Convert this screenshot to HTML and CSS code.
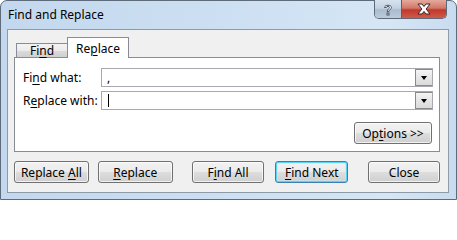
FILE: index.html
```html
<!DOCTYPE html>
<html>
<head>
<meta charset="utf-8">
<title>Find and Replace</title>
<link rel="stylesheet" href="styles.css">
</head>
<body>
<div class="window">
  <div class="titlebar">
    <div class="title">Find and Replace</div>
    <div class="caption">
      <div class="cap help">
        <svg width="12" height="13" viewBox="0 0 12 13">
          <path d="M2.5 4.5 C2.5 1.5 9.5 1.5 9.5 4.5 C9.5 6.5 6.8 6.5 6.8 8.5 L5.2 8.5 C5.2 6 7.6 5.8 7.6 4.5 C7.6 3 4.4 3 4.4 4.5 Z" fill="#fff" stroke="#4a5560" stroke-width="1"/>
          <rect x="5" y="10" width="2" height="2" fill="#fff" stroke="#4a5560" stroke-width="1"/>
        </svg>
      </div>
      <div class="cap close">
        <svg width="16" height="12" viewBox="0 0 16 12">
          <path d="M2 1 L6 1 L8 3.6 L10 1 L14 1 L10.2 6 L14 11 L10 11 L8 8.4 L6 11 L2 11 L5.8 6 Z" fill="#fff" stroke="#3a2424" stroke-width="1" stroke-linejoin="round"/>
        </svg>
      </div>
    </div>
  </div>
  <div class="client">
    <div class="tabs">
      <div class="tab">Fi<u>n</u>d</div>
      <div class="tab active">Re<u>p</u>lace</div>
    </div>
    <div class="panel">
      <div class="fields">
        <label class="label">Fi<u>n</u>d what:</label>
        <div class="combo">
          <span class="value">,</span>
          <span class="drop"><span class="arrow"></span></span>
        </div>
        <label class="label">R<u>e</u>place with:</label>
        <div class="combo">
          <span class="caret"></span>
          <span class="drop"><span class="arrow"></span></span>
        </div>
      </div>
      <div class="options-row">
        <button class="btn options">Op<u>t</u>ions &gt;&gt;</button>
      </div>
    </div>
    <div class="buttons">
      <button class="btn b-all">Replace <u>A</u>ll</button>
      <button class="btn b-rep"><u>R</u>eplace</button>
      <button class="btn b-findall">F<u>i</u>nd All</button>
      <button class="btn b-next default"><u>F</u>ind Next</button>
      <button class="btn b-close">Close</button>
    </div>
  </div>
</div>
</body>
</html>
```
FILE: styles.css
```css
* { box-sizing: border-box; }
html, body { margin: 0; padding: 0; }
body {
  width: 457px;
  height: 200px;
  overflow: hidden;
  font-family: "Noto Sans", "Liberation Sans", sans-serif;
  font-size: 12px;
  color: #000;
}
u { text-decoration: underline; text-underline-offset: 2px; text-decoration-thickness: 1px; }

.window {
  width: 457px;
  height: 200px;
  border: 1px solid #5d6b7a;
  border-radius: 7px 7px 0 0;
  background: linear-gradient(90deg, #c3d8ee 0%, #cfe1f3 60%, #d6e6f5 85%, #c9dbef 100%);
  display: flex;
  flex-direction: column;
}

.titlebar {
  height: 28px;
  display: flex;
  align-items: flex-start;
  flex: none;
}
.title {
  padding: 6px 0 0 7px;
  font-size: 12px;
  line-height: 16px;
  color: #000;
}
.caption {
  margin-left: auto;
  margin-right: 9px;
  margin-top: -1px;
  display: flex;
  height: 19px;
  border: 1px solid #5d6a78;
  border-top: none;
  border-radius: 0 0 5px 5px;
  overflow: hidden;
}
.cap {
  display: flex;
  align-items: center;
  justify-content: center;
  height: 100%;
}
.help {
  width: 27px;
  background: linear-gradient(180deg, #d6e2ee 0%, #c3d2e1 45%, #a9bccf 55%, #bccbdc 100%);
  border-right: 1px solid #6a5a5a;
}
.close {
  width: 44px;
  background: linear-gradient(180deg, #e5a99c 0%, #d2796a 45%, #c0392b 55%, #d25a48 100%);
}

.client {
  margin: 0 7px 0 6px;
  height: 164px;
  border: 1px solid #8d9aa8;
  background: #f0f0f0;
  padding: 7px 8px 0 6px;
  flex: none;
}

.tabs {
  display: flex;
  align-items: flex-end;
  height: 20px;
  padding-left: 2px;
}
.tab {
  height: 14px;
  width: 52px;
  border: 1px solid #898c95;
  border-bottom: none;
  background: linear-gradient(180deg, #f3f3f3 0%, #ebebeb 50%, #dcdcdc 51%, #cfcfcf 100%);
  text-align: center;
  line-height: 13px;
  padding-top: 0;
}
.tab.active {
  height: 21px;
  width: 62px;
  margin-left: -1px;
  margin-bottom: -1px;
  background: #fff;
  position: relative;
  z-index: 1;
  line-height: 20px;
  padding-top: 1px;
}

.panel {
  height: 95px;
  border: 1px solid #898c95;
  background: #fff;
  padding: 10px 6px 0 8px;
}
.fields {
  display: grid;
  grid-template-columns: 78px 1fr;
  row-gap: 4px;
  align-items: center;
}
.label { line-height: 19px; }
.combo {
  height: 19px;
  border: 1px solid #a6a9ae;
  background: #fff;
  display: flex;
  align-items: center;
  position: relative;
}
.value {
  padding-left: 5px;
  line-height: 16px;
}
.caret {
  margin-left: 6px;
  width: 1px;
  height: 13px;
  background: #000;
}
.drop {
  margin-left: auto;
  width: 17px;
  height: 17px;
  border: 1px solid #8a8a8a;
  border-right: none;
  background: linear-gradient(180deg, #f4f4f4 0%, #e6e6e6 50%, #dadada 100%);
  display: flex;
  align-items: center;
  justify-content: center;
}
.arrow {
  width: 0;
  height: 0;
  border-left: 3.5px solid transparent;
  border-right: 3.5px solid transparent;
  border-top: 4px solid #000;
  margin-top: 1px;
}

.options-row {
  display: flex;
  justify-content: flex-end;
  margin-top: 12px;
  padding-right: 1px;
}

.btn {
  font-family: inherit;
  font-size: 12px;
  color: #000;
  height: 22px;
  padding: 0;
  border: 1px solid #707070;
  border-radius: 3px;
  background: linear-gradient(180deg, #f2f2f2 0%, #ebebeb 48%, #dddddd 52%, #cfcfcf 100%);
  box-shadow: inset 0 0 0 1px rgba(255,255,255,0.7);
  line-height: 19px;
  text-align: center;
}
.options { width: 78px; }

.buttons {
  display: flex;
  margin-top: 9px;
}
.b-all { width: 75px; }
.b-rep { width: 75px; margin-left: 9px; }
.b-findall { width: 73px; margin-left: 19px; }
.b-next { width: 73px; margin-left: 11px; }
.b-close { width: 72px; margin-left: 20px; }
.btn.default {
  border-color: #3c7fb1;
  box-shadow: inset 0 0 0 1px #5cd3f5, inset 0 0 0 2px rgba(190,235,250,0.5);
}
```
